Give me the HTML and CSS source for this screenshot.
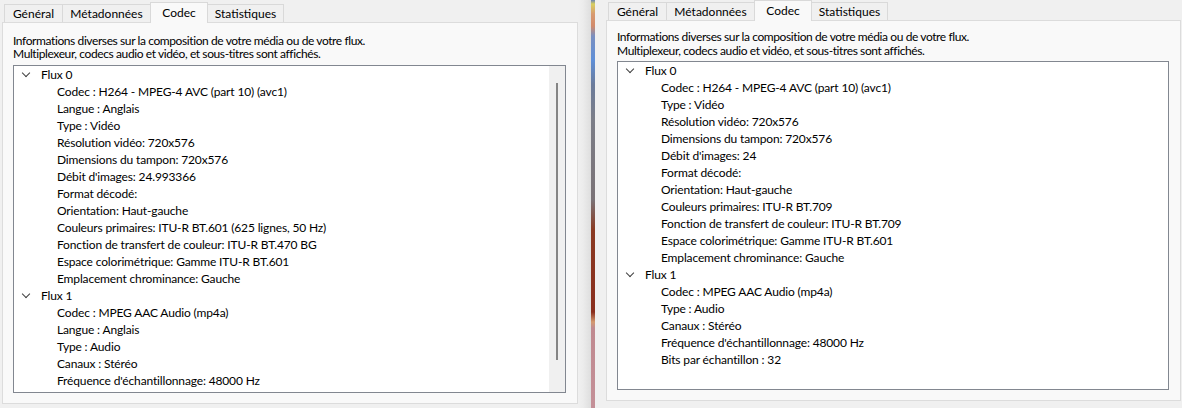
FILE: index.html
```html
<!DOCTYPE html>
<html lang="fr">
<head>
    <meta charset="UTF-8">
    <title>Informations sur le codec</title>
    <link rel="stylesheet" href="styles.css">
</head>
<body>
    <!-- Left window -->
    <div class="window window-left">
        <div class="tabs">
            <span class="tab">Général</span>
            <span class="tab">Métadonnées</span>
            <span class="tab active">Codec</span>
            <span class="tab">Statistiques</span>
        </div>
        <div class="pane">
            <div class="desc">
                <div>Informations diverses sur la composition de votre média ou de votre flux.</div>
                <div>Multiplexeur, codecs audio et vidéo, et sous-titres sont affichés.</div>
            </div>
            <div class="tree">
                <div class="tree-list">
                    <div class="node"><span class="chevron"></span>Flux 0</div>
                    <div class="leaf">Codec : H264 - MPEG-4 AVC (part 10) (avc1)</div>
                    <div class="leaf">Langue : Anglais</div>
                    <div class="leaf">Type : Vidéo</div>
                    <div class="leaf">Résolution vidéo: 720x576</div>
                    <div class="leaf">Dimensions du tampon: 720x576</div>
                    <div class="leaf">Débit d'images: 24.993366</div>
                    <div class="leaf">Format décodé:</div>
                    <div class="leaf">Orientation: Haut-gauche</div>
                    <div class="leaf">Couleurs primaires: ITU-R BT.601 (625 lignes, 50 Hz)</div>
                    <div class="leaf">Fonction de transfert de couleur: ITU-R BT.470 BG</div>
                    <div class="leaf">Espace colorimétrique: Gamme ITU-R BT.601</div>
                    <div class="leaf">Emplacement chrominance: Gauche</div>
                    <div class="node"><span class="chevron"></span>Flux 1</div>
                    <div class="leaf">Codec : MPEG AAC Audio (mp4a)</div>
                    <div class="leaf">Langue : Anglais</div>
                    <div class="leaf">Type : Audio</div>
                    <div class="leaf">Canaux : Stéréo</div>
                    <div class="leaf">Fréquence d'échantillonnage: 48000 Hz</div>
                </div>
                <div class="scrollbar"><div class="thumb"></div></div>
            </div>
        </div>
    </div>

    <div class="wallpaper"></div>

    <!-- Right window -->
    <div class="window window-right">
        <div class="tabs">
            <span class="tab">Général</span>
            <span class="tab">Métadonnées</span>
            <span class="tab active">Codec</span>
            <span class="tab">Statistiques</span>
        </div>
        <div class="pane">
            <div class="desc">
                <div>Informations diverses sur la composition de votre média ou de votre flux.</div>
                <div>Multiplexeur, codecs audio et vidéo, et sous-titres sont affichés.</div>
            </div>
            <div class="tree">
                <div class="tree-list">
                    <div class="node"><span class="chevron"></span>Flux 0</div>
                    <div class="leaf">Codec : H264 - MPEG-4 AVC (part 10) (avc1)</div>
                    <div class="leaf">Type : Vidéo</div>
                    <div class="leaf">Résolution vidéo: 720x576</div>
                    <div class="leaf">Dimensions du tampon: 720x576</div>
                    <div class="leaf">Débit d'images: 24</div>
                    <div class="leaf">Format décodé:</div>
                    <div class="leaf">Orientation: Haut-gauche</div>
                    <div class="leaf">Couleurs primaires: ITU-R BT.709</div>
                    <div class="leaf">Fonction de transfert de couleur: ITU-R BT.709</div>
                    <div class="leaf">Espace colorimétrique: Gamme ITU-R BT.601</div>
                    <div class="leaf">Emplacement chrominance: Gauche</div>
                    <div class="node"><span class="chevron"></span>Flux 1</div>
                    <div class="leaf">Codec : MPEG AAC Audio (mp4a)</div>
                    <div class="leaf">Type : Audio</div>
                    <div class="leaf">Canaux : Stéréo</div>
                    <div class="leaf">Fréquence d'échantillonnage: 48000 Hz</div>
                    <div class="leaf">Bits par échantillon : 32</div>
                </div>
            </div>
        </div>
    </div>
</body>
</html>
```

FILE: styles.css
```css
/* General */
html, body {
    height: 100%;
}

body {
    margin: 0;
    font-family: Lato, "Liberation Sans", sans-serif;
    font-size: 12px;
    letter-spacing: -0.4px;
    color: #000;
    background-color: #f0f0f0;
    display: flex;
    overflow: hidden;
}

.window {
    display: flex;
    flex-direction: column;
    background-color: #f0f0f0;
}

.window-left {
    width: 591px;
    padding: 2px 0 0 2px;
    box-sizing: border-box;
    /* shadow of the right window */
    background: linear-gradient(to right, #f0f0f0 0, #f0f0f0 578px, #ececec 583px, #dedede 591px);
}

.window-right {
    flex: 1;
    padding: 0 1px 0 11px;
}

.wallpaper {
    width: 4px;
    background: linear-gradient(to bottom, #6a84b8 0, #d8d060 4px, #d89a70 14px, #d28a6a 26px, #7a8fc0 36px, #5f8fd8 60px, #6b7b9a 85px, #7c7e88 120px, #7a7276 200px, #8a3a22 230px, #8a2e1e 312px, #d49a70 322px, #c08a90 328px, #c49098 408px);
}

/* Tabs */
.tabs {
    display: flex;
    align-items: flex-end;
    padding-left: 2px;
    height: 20px;
}

.tab {
    height: 18px;
    line-height: 17px;
    padding: 0 4px;
    margin-right: -1px;
    border: 1px solid #d9d9d9;
    border-bottom: none;
    background-color: #f0f0f0;
    box-sizing: border-box;
    text-align: center;
    letter-spacing: 0;
}

.tab:nth-child(1) { width: 59px; }
.tab:nth-child(2) { width: 89px; }
.tab:nth-child(4) { width: 77px; }

.tab.active {
    width: 58px;
    height: 21px;
    line-height: 19px;
    background-color: #f9f9f9;
    position: relative;
    z-index: 1;
    margin-bottom: -1px;
}

/* Pane */
.pane {
    flex: 1;
    border: 1px solid #dcdcdc;
    background-color: #f9f9f9;
    padding: 11px 10px 10px 10px;
    display: flex;
    flex-direction: column;
}

.window-left .pane {
    width: 576px;
    box-sizing: border-box;
    margin-bottom: 4px;
}

.window-right .pane {
    padding-top: 9px;
    margin-bottom: 7px;
}

.desc {
    margin-bottom: 5px;
}

.desc div {
    height: 13px;
    line-height: 13px;
    white-space: nowrap;
}

.window-right .desc div {
    height: 14px;
    line-height: 14px;
}

.window-right .desc {
    margin-bottom: 3px;
}

/* Tree */
.tree {
    flex: 1;
    display: flex;
    background-color: #fff;
    border: 1px solid #828790;
    margin-right: 1px;
    overflow: hidden;
    letter-spacing: -0.15px;
}

.tree-list {
    flex: 1;
}

.node,
.leaf {
    height: 17px;
    line-height: 17px;
    white-space: nowrap;
}

.node {
    padding-left: 7px;
    display: flex;
    align-items: center;
}

.leaf {
    padding-left: 43px;
}

.chevron {
    width: 5px;
    height: 5px;
    border-right: 1px solid #404040;
    border-bottom: 1px solid #404040;
    transform: rotate(45deg);
    margin: -4px 12px 0 2px;
}

.scrollbar {
    width: 16px;
    background-color: #f0f0f0;
    padding: 17px 0 0 0;
    display: flex;
    justify-content: center;
}

.thumb {
    width: 2px;
    height: 277px;
    background-color: #858585;
}
```
